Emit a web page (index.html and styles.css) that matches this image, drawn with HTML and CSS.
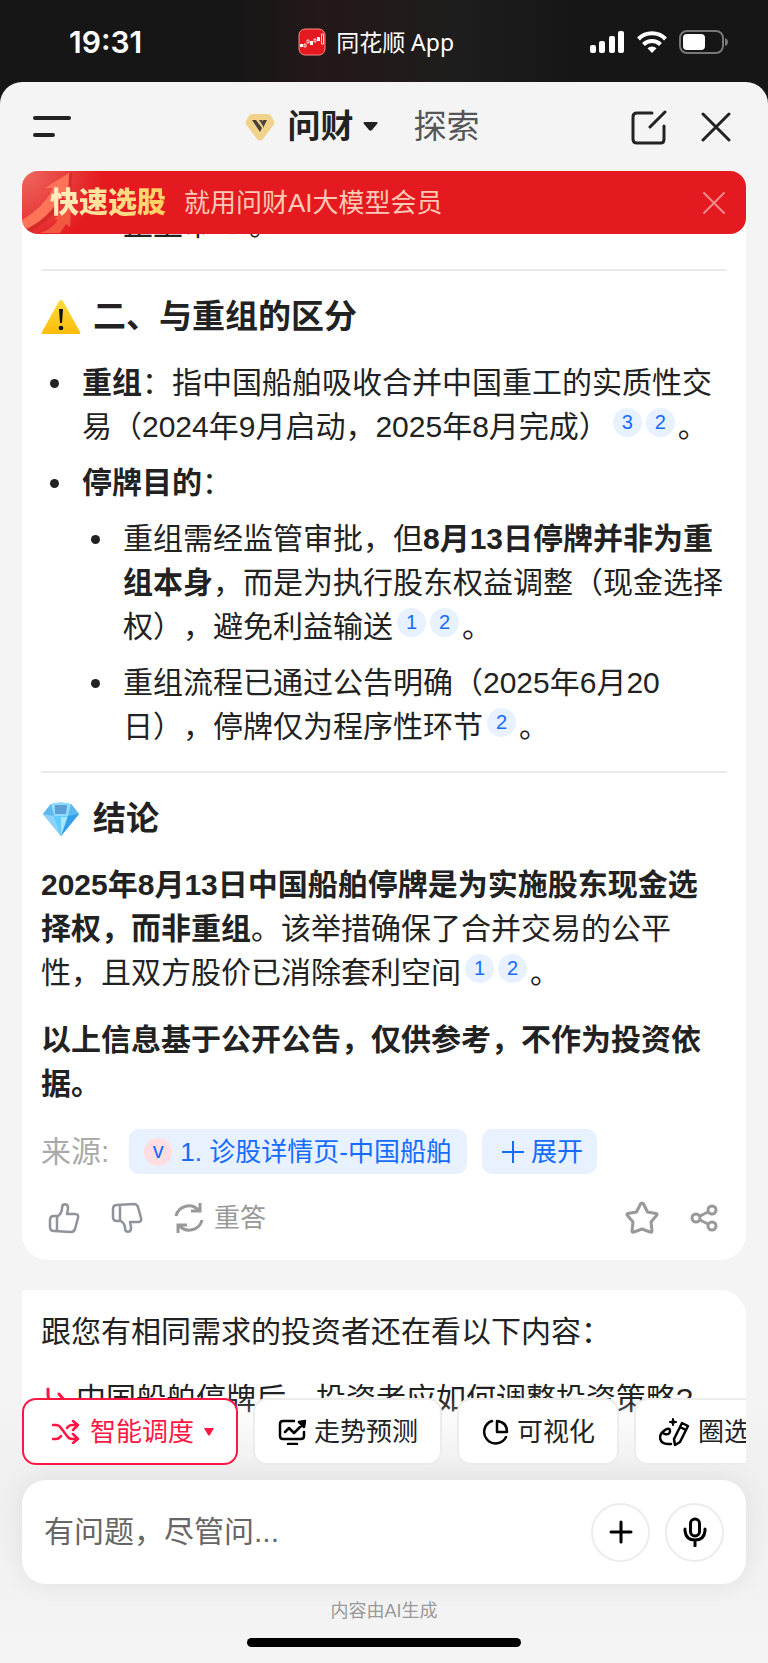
FILE: index.html
```html
<!DOCTYPE html>
<html lang="zh-CN">
<head>
  <meta charset="UTF-8" />
  <meta name="viewport" content="width=device-width, initial-scale=1.0"/>
  <title>问财</title>
  <link rel="stylesheet" href="styles.css">
</head>
<body>
  <div class="status-bar">
    <span class="time">19:31</span>
    <span class="from-app">
      <svg width="28" height="28" viewBox="0 0 28 28">
        <rect x="1" y="1" width="26" height="26" rx="6" fill="#e5191f" stroke="#f58a8c" stroke-width="1"/>
        <path d="M2 16h3v3H2zM12 13h3v4h-3zM19 9h3v4h-3z" fill="#fff"/>
        <path d="M6 16h2v3H6zM9 12h2v3H9zM16 11h2v3h-2zM23.500 6h2v10h-2z" fill="none" stroke="#fff" stroke-width=".8"/>
      </svg>
      同花顺 App
    </span>
    <span class="signals">
      <svg width="35" height="22" viewBox="0 0 35 22" fill="#fff">
        <rect x="0" y="14" width="6" height="8" rx="2"/>
        <rect x="9" y="10" width="6" height="12" rx="2"/>
        <rect x="19" y="5" width="6" height="17" rx="2"/>
        <rect x="28" y="0" width="6" height="22" rx="2"/>
      </svg>
      <svg width="30" height="22" viewBox="0 0 30 22" fill="none" stroke="#fff" stroke-width="4">
        <path d="M1.500 8a19 19 0 0 1 27 0"/>
        <path d="M6.500 13.500a12 12 0 0 1 17 0"/>
        <path d="M15 22l-4.500-4.800a6.500 6.500 0 0 1 9 0z" fill="#fff" stroke="none"/>
      </svg>
      <svg width="49" height="24" viewBox="0 0 49 24">
        <rect x="1" y="1" width="43" height="22" rx="7" fill="none" stroke="#77777a" stroke-width="2"/>
        <rect x="4" y="4" width="22" height="16" rx="4" fill="#fff"/>
        <path d="M46 8q3 1 3 4t-3 4z" fill="#77777a"/>
      </svg>
    </span>
  </div>

  <div class="sheet">
    <header class="header">
      <button class="icon-btn" aria-label="菜单">
        <svg width="38" height="24" viewBox="0 0 38 24" stroke="#222" stroke-width="4" stroke-linecap="round">
          <path d="M2 3h34M2 20h18"/>
        </svg>
      </button>
      <nav class="tabs">
        <svg width="30" height="28" viewBox="0 0 30 28">
          <path d="M7 1h16q2 0 3 2l3 5q1 2-.5 4L18 26q-3 3-6 0L1.500 12Q0 10 1 8l3-5q1-2 3-2z" fill="#f0d28a"/>
          <path d="M7 7h4l6 8-2 4zM14 7h3l2 4-1 2zM18 7h4l-4 8z" fill="#4a4038"/>
        </svg>
        <a href="#" class="tab active">问财</a>
        <svg width="15" height="9" viewBox="0 0 15 9"><path d="M1 0h13q1 1 0 2L9 8q-1.500 1.500-3 0L1 2Q0 1 1 0z" fill="#222"/></svg>
        <a href="#" class="tab">探索</a>
      </nav>
      <div class="header-actions">
        <button class="icon-btn" aria-label="新对话">
          <svg width="36" height="36" viewBox="0 0 36 36" fill="none" stroke="#222" stroke-width="3" stroke-linecap="round" stroke-linejoin="round">
            <path d="M21 4H6q-4 0-4 4v22q0 4 4 4h24q3 0 3-4V17M34 3L19 18"/>
          </svg>
        </button>
        <button class="icon-btn" aria-label="关闭">
          <svg width="30" height="30" viewBox="0 0 30 30" stroke="#222" stroke-width="3" stroke-linecap="round">
            <path d="M2 2l26 26M28 2L2 28"/>
          </svg>
        </button>
      </div>
    </header>

    <div class="banner">
      <svg class="banner-arrow" width="70" height="62" viewBox="0 0 70 62">
        <path d="M0 62v-4Q24 44 36 22l-10 2L50 1l-1 34-7-8Q30 50 6 62z" fill="#c9271f" opacity=".6"/>
        <path d="M0 60v-11Q22 36 31 17l-8 0L47 2l-1 28-7-6Q28 48 0 60z" fill="#ff7359"/>
        <path d="M18 62q12-4 18-13l-4-1 17-13-1 21-4-3-6 9z" fill="#f2573f"/>
      </svg>
      <strong class="banner-title">快速选股</strong>
      <span class="banner-text">就用问财AI大模型会员</span>
      <button class="icon-btn banner-close" aria-label="关闭广告">
        <svg width="22" height="22" viewBox="0 0 22 22" stroke="#f58a8c" stroke-width="2" stroke-linecap="round">
          <path d="M1 1l20 20M21 1L1 21"/>
        </svg>
      </button>
    </div>

    <main class="chat">
      <article class="card answer">
        <ul>
          <li class="bare">
            <ul><li class="bare">止上市<a href="#" class="cite">2</a>。</li></ul>
          </li>
        </ul>
        <hr>
        <h2>
          <svg width="40" height="36" viewBox="0 0 40 36">
            <defs>
              <linearGradient id="warn" x1="0" y1="0" x2="0" y2="1">
                <stop offset="0" stop-color="#ffdc3a"/>
                <stop offset="1" stop-color="#fcbc0d"/>
              </linearGradient>
            </defs>
            <path d="M18 2q2-2 4 0l17 31q1 2-1 2H2q-2 0-1-2z" fill="url(#warn)"/>
            <path d="M18 10h4l-1 14h-2z" fill="#111"/>
            <circle cx="20" cy="29" r="2.300" fill="#111"/>
          </svg>
          二、与重组的区分
        </h2>
        <ul>
          <li><b>重组</b>：指中国船舶吸收合并中国重工的实质性交易（2024年9月启动，2025年8月完成）<a href="#" class="cite">3</a><a href="#" class="cite">2</a>。</li>
          <li><b>停牌目的</b>：
            <ul>
              <li>重组需经监管审批，但<b>8月13日停牌并非为重组本身</b>，而是为执行股东权益调整（现金选择权），避免利益输送<a href="#" class="cite">1</a><a href="#" class="cite">2</a>。</li>
              <li>重组流程已通过公告明确（2025年6月20日），停牌仅为程序性环节<a href="#" class="cite">2</a>。</li>
            </ul>
          </li>
        </ul>
        <hr>
        <h2>
          <svg width="40" height="36" viewBox="0 0 40 36">
            <path d="M10 3q10-3 20 0l8 10L20 35 2 13z" fill="#4eb5f5"/>
            <path d="M2 13l8-10 3 12zM30 3l8 10-11 2z" fill="#5cb8ef"/>
            <path d="M10 3q10-3 20 0l-3 12H13z" fill="#8fdcff"/>
            <path d="M14 4h12l-1 9H14z" fill="#5b9fd6"/>
            <path d="M2 13l11 2 7 20z" fill="#8bd3ff"/>
            <path d="M13 15h14l-7 20z" fill="#5fcdff"/>
            <path d="M20 16h7l-7 19z" fill="#a5e6ff"/>
            <path d="M27 15l11-2-18 22z" fill="#339fe8"/>
          </svg>
          结论
        </h2>
        <p><b>2025年8月13日中国船舶停牌是为实施股东现金选择权，而非重组</b>。该举措确保了合并交易的公平性，且双方股价已消除套利空间<a href="#" class="cite">1</a><a href="#" class="cite">2</a>。</p>
        <p><b>以上信息基于公开公告，仅供参考，不作为投资依据。</b></p>

        <div class="sources">
          <span class="sources-label">来源:</span>
          <a href="#" class="source"><span class="source-mark">v</span>1. 诊股详情页-中国船舶</a>
          <button class="source expand">
            <svg width="22" height="22" viewBox="0 0 22 22" stroke="#146cff" stroke-width="2"><path d="M0 11h22M11 0v22"/></svg>
            展开
          </button>
        </div>

        <div class="actions">
          <button class="icon-btn" aria-label="赞">
            <svg width="32" height="32" viewBox="0 0 32 32" fill="none" stroke="#8f939b" stroke-width="2.500" stroke-linejoin="round">
              <path d="M10 14c3-2 4-5 4-8 0-5 6-5 6 0 0 3-1 5-1 6h8q4 0 3 4l-3 11q-1 3-4 3L6 29q-4 0-4-4v-7q0-4 4-4zM9 14v15"/>
            </svg>
          </button>
          <button class="icon-btn" aria-label="踩">
            <svg width="32" height="32" viewBox="0 0 32 32" fill="none" stroke="#8f939b" stroke-width="2.500" stroke-linejoin="round">
              <path d="M10 19c3 2 4 4 4 7 0 5 6 5 6 0 0-3-1-5-1-6h8q4 0 3-4L27 5q-1-3-4-3L6 3Q2 3 2 7v8q0 4 4 4zM9 3v16"/>
            </svg>
          </button>
          <button class="icon-btn retry">
            <svg width="30" height="32" viewBox="0 0 30 32" fill="none" stroke="#999" stroke-width="3">
              <path d="M2 14A13 13 0 0 1 25 9M26 1v8h-9M28 18A13 13 0 0 1 5 23M4 31v-8h9"/>
            </svg>
            重答
          </button>
          <button class="icon-btn star" aria-label="收藏">
            <svg width="34" height="34" viewBox="0 0 34 34" fill="none" stroke="#999" stroke-width="3" stroke-linejoin="round">
              <path d="M15.500 3q1.500-2 3 0l4 8 8.500 1.500q2 .5.500 2L26 21l1 9q0 2-2 1l-8-3-8 3q-2 1-2-1l1-9-5.500-6.500q-1.500-1.500.5-2L11.500 11z"/>
            </svg>
          </button>
          <button class="icon-btn" aria-label="分享">
            <svg width="28" height="28" viewBox="0 0 28 28" fill="none" stroke="#999" stroke-width="3">
              <circle cx="6" cy="14" r="4"/>
              <circle cx="22" cy="6" r="4"/>
              <circle cx="22" cy="22" r="4"/>
              <path d="M10 12l8-4M10 16l8 4"/>
            </svg>
          </button>
        </div>
      </article>

      <section class="card related">
        <p>跟您有相同需求的投资者还在看以下内容：</p>
        <a href="#" class="question">
          <svg width="22" height="24" viewBox="0 0 22 24" fill="none" stroke="#ff1744" stroke-width="3" stroke-linecap="round" stroke-linejoin="round">
            <path d="M2 2v6q0 6 6 6h10M13 7l6 7-6 7"/>
          </svg>
          中国船舶停牌后，投资者应如何调整投资策略?
        </a>
      </section>
    </main>

    <footer class="dock">
      <div class="tools">
        <button class="tool selected">
          <svg width="29" height="24" viewBox="0 0 29 24" fill="none" stroke="#ff1744" stroke-width="2.500" stroke-linecap="round" stroke-linejoin="round">
            <path d="M2 5h3q3 0 5 3l6 8q2 3 5 3h6M2 19h3q3 0 5-3M16 8q2-3 5-3h6M22 1l5 4-5 5M22 14l5 5-5 4"/>
          </svg>
          智能调度
          <svg width="10" height="8" viewBox="0 0 10 8"><path d="M0 0h10L6 7q-1 1-2 0z" fill="#ff1744"/></svg>
        </button>
        <button class="tool">
          <svg width="28" height="26" viewBox="0 0 28 26" fill="none" stroke="#000" stroke-width="2.500" stroke-linecap="round" stroke-linejoin="round">
            <path d="M16 2H5Q2 2 2 5v12q0 3 3 3h18q3 0 3-3v-4M10 25h9M7 13l4-4 5 5 10-10M21 3l6-1-1 6z"/>
          </svg>
          走势预测
        </button>
        <button class="tool">
          <svg width="27" height="26" viewBox="0 0 27 26" fill="none" stroke="#000" stroke-width="2.500" stroke-linecap="round" stroke-linejoin="round">
            <path d="M10 2a11.500 11.500 0 1 0 14 16M15 2v11h10q0-10-10-11z"/>
          </svg>
          可视化
        </button>
        <button class="tool">
          <svg width="31" height="28" viewBox="0 0 31 28" fill="none" stroke="#000" stroke-width="2.500" stroke-linecap="round" stroke-linejoin="round">
            <path d="M6 12q5-3 5 1t-5 3q-4-1 0-4Q1 15 1 20q1 6 8 6h3M23 5l6 3-8 16-5 3-1-6zM21 9l6 3"/>
            <path d="M14 0l1 3 3 1-3 1-1 3-1-3-3-1 3-1z" fill="#000" stroke-width="1"/>
          </svg>
          圈选
        </button>
      </div>
      <div class="composer">
        <input type="text" placeholder="有问题，尽管问..." aria-label="提问">
        <button class="round-btn" aria-label="添加">
          <svg width="24" height="24" viewBox="0 0 24 24" stroke="#000" stroke-width="3" stroke-linecap="round"><path d="M2 12h20M12 2v20"/></svg>
        </button>
        <button class="round-btn" aria-label="语音">
          <svg width="24" height="30" viewBox="0 0 24 30" fill="none" stroke="#000" stroke-width="3" stroke-linecap="round">
            <rect x="7.500" y="2" width="9" height="17" rx="4.500"/>
            <path d="M2 12v2q1 9 10 9t10-9v-2M12 23v6"/>
          </svg>
        </button>
      </div>
      <p class="notice">内容由AI生成</p>
      <div class="home-bar"></div>
    </footer>
  </div>
</body>
</html>
```
FILE: styles.css
```css
* {
  box-sizing: border-box;
}
body {
  margin: 0;
  min-height: 100vh;
  display: flex;
  flex-direction: column;
  background: #161616;
  color: #222;
  font-family: "Liberation Sans", "Noto Sans CJK SC", sans-serif;
  font-size: 30px;
  line-height: 44px;
  text-spacing-trim: space-all;
}
button {
  font: inherit;
  color: inherit;
  cursor: pointer;
}
a {
  color: inherit;
  text-decoration: none;
}
svg {
  display: block;
  flex: none;
}
p, h2, ul {
  margin: 0;
}

.status-bar {
  display: flex;
  align-items: center;
  justify-content: space-between;
  height: 82px;
  padding: 2px 40px 0 69px;
  background: linear-gradient(90deg, #161616 30%, #241818 42%, #1e1d1d 60%, #161616 75%);
  color: #fff;
}
.time {
  font-family: Inter, sans-serif;
  font-weight: 600;
  font-size: 30px;
}
.from-app {
  display: flex;
  align-items: center;
  gap: 10px;
  padding-left: 20px;
  font-family: "Noto Sans", "Noto Sans CJK SC", sans-serif;
  font-size: 23px;
}
.signals {
  display: flex;
  align-items: center;
  gap: 12px;
}

.sheet {
  flex: 1;
  display: flex;
  flex-direction: column;
  background: #f4f4f4;
  border-radius: 22px 22px 0 0;
}
.header {
  display: flex;
  align-items: center;
  justify-content: space-between;
  height: 89px;
  padding: 0 37px 0 33px;
}
.icon-btn {
  padding: 0;
  border: none;
  background: none;
}
.tabs {
  display: flex;
  align-items: center;
  padding-left: 22px;
}
.tab {
  margin-left: 36px;
  font-size: 33px;
  color: #555;
}
.tab.active {
  margin: 0 9px 0 13px;
  color: #222;
  font-weight: bold;
}
.header-actions {
  display: flex;
  align-items: center;
  gap: 34px;
}

.banner {
  position: relative;
  z-index: 1;
  display: flex;
  align-items: center;
  height: 63px;
  margin: 0 22px;
  padding: 0 21px 0 28px;
  border-radius: 16px;
  overflow: hidden;
  background: radial-gradient(circle at 0 0, #ee6a60, #e41a20 80px);
}
.banner-arrow {
  position: absolute;
  left: 0;
  top: 0;
}
.banner-title {
  position: relative;
  font-size: 29px;
  font-weight: 900;
  background: linear-gradient(90deg, #ffeec4, #ffcf5e);
  background-clip: text;
  color: transparent;
}
.banner-text {
  margin-left: 18px;
  font-size: 26px;
  color: #ffc9b5;
}
.banner-close {
  margin-left: auto;
}

.chat {
  flex: 1;
  display: flex;
  flex-direction: column;
  gap: 30px;
  margin: -31px 22px -80px;
}
.card {
  padding: 20px 19px;
  background: #fff;
  border-radius: 26px;
}
.answer {
  padding-top: 0;
  border-radius: 0 0 26px 26px;
}
.answer hr {
  height: 2px;
  margin: 22px 0 24px;
  border: none;
  background: #ebebeb;
}
.answer h2 {
  display: flex;
  align-items: center;
  gap: 12px;
  font-size: 33px;
  margin-bottom: 22px;
}
.answer ul {
  padding-left: 34px;
}
.answer li {
  padding-left: 7px;
}
.answer li + li,
.answer li ul {
  margin-top: 12px;
}
.answer ul ul {
  list-style: disc;
}
.answer li.bare {
  list-style: none;
}
.answer li.bare ul {
  margin-top: 0;
}
.answer p {
  margin-bottom: 23px;
}
.cite {
  display: inline-block;
  width: 29px;
  height: 29px;
  margin: 0 3px 0 4px;
  border-radius: 50%;
  background: #e7f1ff;
  color: #146cff;
  font-size: 20px;
  line-height: 29px;
  text-align: center;
  vertical-align: 8px;
}
.cite + .cite {
  margin-left: 1px;
}

.sources {
  display: flex;
  align-items: center;
  gap: 15px;
}
.sources-label {
  color: #aaa;
  margin-right: 5px;
}
.source {
  display: flex;
  align-items: center;
  gap: 8px;
  height: 45px;
  padding: 0 15px;
  border: none;
  border-radius: 10px;
  background: #e7f1ff;
  color: #146cff;
  font-size: 26px;
}
.source-mark {
  width: 28px;
  height: 28px;
  border-radius: 50%;
  background: #ffdde0;
  font-size: 22px;
  line-height: 26px;
  text-align: center;
}
.expand {
  gap: 7px;
  padding: 0 14px 0 20px;
}

.actions {
  display: flex;
  align-items: center;
  gap: 31px;
  padding: 22px 9px 0 7px;
}
.retry {
  display: flex;
  align-items: center;
  gap: 10px;
  color: #999;
  font-size: 26px;
}
.star {
  margin-left: auto;
}

.related {
  flex: 1;
  border-top-left-radius: 4px;
}
.question {
  display: flex;
  align-items: center;
  gap: 8px;
  margin-top: 23px;
  padding-left: 5px;
}

.dock {
  position: sticky;
  bottom: 0;
  background: linear-gradient(rgba(244, 244, 244, 0), #f0f0f0 70px, #f4f4f4);
}
.tools {
  display: flex;
  gap: 15px;
  margin: 0 22px;
  overflow: hidden;
}
.tool {
  display: flex;
  flex: none;
  align-items: center;
  gap: 8px;
  height: 67px;
  padding: 0 22px 0 23px;
  border: 2px solid #ececec;
  border-radius: 14px;
  background: #fff;
  font-size: 26px;
}
.tool.selected {
  gap: 10px;
  padding: 0 22px 0 27px;
  border-color: #ff1744;
  color: #ff1744;
}
.composer {
  display: flex;
  align-items: center;
  gap: 15px;
  height: 104px;
  margin: 15px 22px 12px;
  padding: 0 22px;
  border-radius: 24px;
  background: #fff;
  box-shadow: 0 0 28px rgba(0, 0, 0, 0.08);
}
.composer input {
  flex: 1;
  min-width: 0;
  padding: 0;
  border: none;
  outline: none;
  background: none;
  font: inherit;
}
.composer input::placeholder {
  color: #666;
}
.round-btn {
  display: flex;
  align-items: center;
  justify-content: center;
  width: 59px;
  height: 59px;
  padding: 0;
  border: 2px solid #ececec;
  border-radius: 50%;
  background: #fff;
}
.notice {
  font-size: 18px;
  line-height: 30px;
  text-align: center;
  color: #999;
}
.home-bar {
  width: 274px;
  height: 9px;
  margin: 12px auto 16px;
  border-radius: 5px;
  background: #000;
}
```
